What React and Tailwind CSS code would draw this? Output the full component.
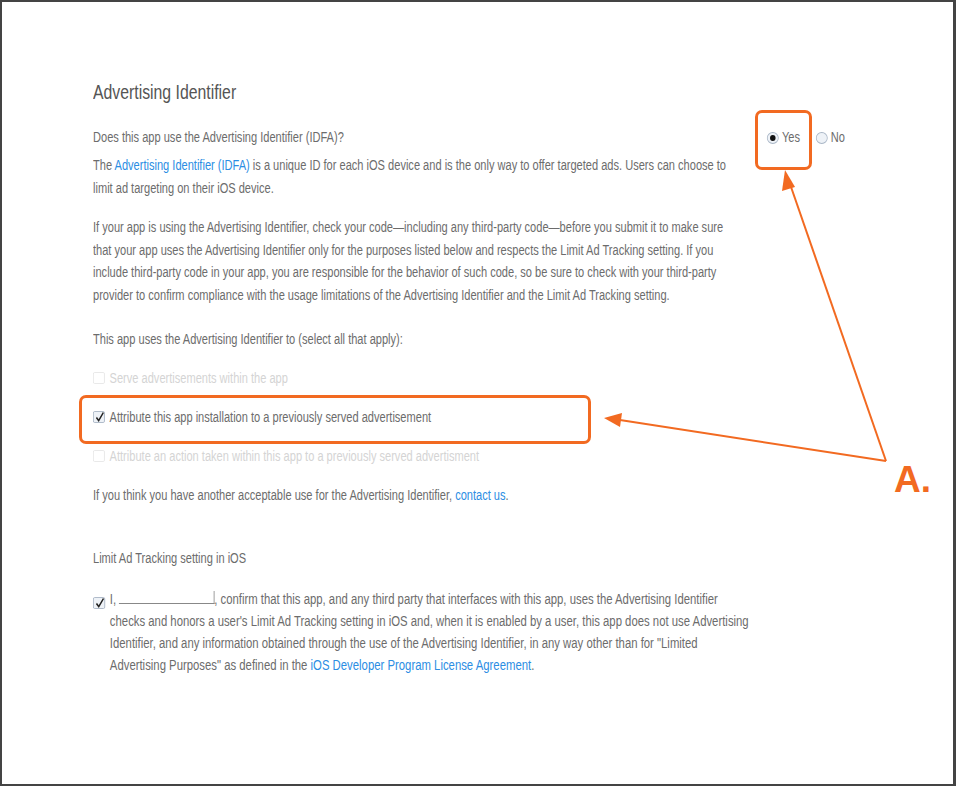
import React from 'react';

const font = { fontFamily: "'Liberation Sans', Arial, sans-serif" };

// boxes sit inside the horizontally squeezed column, so they are drawn wider than they show
const Box = ({ checked, disabled, w = 'w-[15px]' }) => (
    <span className={`relative inline-flex items-center justify-center ${w} h-[12px] border rounded-[2px] shrink-0 ${disabled ? 'border-[#e6e6e6] bg-white' : 'border-[#a8b4c4] bg-[#eef2f7]'}`}>
        {checked && (
            <svg viewBox="0 0 14 12" preserveAspectRatio="none" className="absolute left-[1px] top-[-1px] w-full h-[12px]">
                <path d="M2.5 6.5 L5.6 9.6 L12 1.5" fill="none" stroke="#222" strokeWidth="1.8" />
            </svg>
        )}
    </span>
);

const Radio = ({ checked, label }) => (
    <label className="flex items-center gap-[4px]">
        <span className="w-[15px] h-[12px] rounded-[50%] border border-[#a9b6c6] bg-[#eef2f7] flex items-center justify-center">
            {checked && <span className="w-[7px] h-[6px] rounded-[50%] bg-[#111]" />}
        </span>
        <span>{label}</span>
    </label>
);

const Link = ({ children }) => <span className="text-[#2b8de3]">{children}</span>;

export default function App() {
    return (
        <div className="relative w-[956px] h-[786px] bg-white border-t-2 border-l-2 border-b-2 border-r-[3px] border-[#444] text-[#6c6c6c] text-[14px] overflow-hidden" style={font}>
            <div className="pl-[91px] pt-[76px]">
                <div className="w-[1090px] origin-top-left scale-x-[0.79]">
                    <h1 className="text-[20px] text-[#555] leading-[28px]">Advertising Identifier</h1>

                    <div className="flex mt-[20px]">
                        <div className="w-[826px] shrink-0 leading-[23px]">
                            <p>Does this app use the Advertising Identifier (IDFA)?</p>
                            <p className="mt-[5px] w-[850px]">
                                The <Link>Advertising Identifier (IDFA)</Link> is a unique ID for each iOS device and is the only way to offer targeted ads. Users can choose to<br />
                                limit ad targeting on their iOS device.
                            </p>
                            <p className="mt-[16px] w-[822px] leading-[22.7px]">
                                If your app is using the Advertising Identifier, check your code—including any third-party code—before you submit it to make sure that your app uses the Advertising Identifier only for the purposes listed below and respects the Limit Ad Tracking setting. If you include third-party code in your app, you are responsible for the behavior of such code, so be sure to check with your third-party provider to confirm compliance with the usage limitations of the Advertising Identifier and the Limit Ad Tracking setting.
                            </p>
                            <p className="mt-[21px]">This app uses the Advertising Identifier to (select all that apply):</p>

                            <div className="mt-[16px] flex flex-col gap-[16px]">
                                <div className="flex items-center gap-[6px] text-[#d4d4d4]">
                                    <Box disabled />
                                    <span>Serve advertisements within the app</span>
                                </div>
                                <div className="flex items-center gap-[6px]">
                                    <Box checked />
                                    <span>Attribute this app installation to a previously served advertisement</span>
                                </div>
                                <div className="flex items-center gap-[6px] text-[#d4d4d4]">
                                    <Box disabled />
                                    <span>Attribute an action taken within this app to a previously served advertisment</span>
                                </div>
                            </div>

                            <p className="mt-[16px]">
                                If you think you have another acceptable use for the Advertising Identifier, <Link>contact us</Link>.
                            </p>
                        </div>

                        <div className="flex gap-[20px] ml-[27px] h-[23px] items-center">
                            <Radio checked label="Yes" />
                            <Radio label="No" />
                        </div>
                    </div>

                    <p className="mt-[40px] leading-[23px]">Limit Ad Tracking setting in iOS</p>
                </div>

                <div className="w-[1000px] origin-top-left scale-x-[0.81] mt-[17px]">
                    <div className="flex gap-[6px] w-[850px] leading-[22px] pt-[1px]">
                        <div className="pt-[5px]"><Box checked w="w-[14.8px]" /></div>
                        <p>
                            <span>I,</span>
                            <span className="inline-block w-[118px] ml-[3px] border-b border-r border-[#888] h-[13px]" />, confirm that this app, and any third party that interfaces with this app, uses the Advertising Identifier<br />
                            checks and honors a user's Limit Ad Tracking setting in iOS and, when it is enabled by a user, this app does not use Advertising<br />
                            Identifier, and any information obtained through the use of the Advertising Identifier, in any way other than for "Limited<br />
                            Advertising Purposes" as defined in the <Link>iOS Developer Program License Agreement</Link>.
                        </p>
                    </div>
                </div>
            </div>

            {/* annotations */}
            <div className="absolute left-[753px] top-[108px] w-[57px] h-[60px] border-[3.5px] border-[#f26a21] rounded-[7px]" />
            <div className="absolute left-[77px] top-[393px] w-[512px] h-[49px] border-[3.5px] border-[#f26a21] rounded-[7px]" />
            <svg className="absolute left-0 top-0" width="956" height="786" viewBox="0 0 956 786">
                <line x1="884" y1="459" x2="788" y2="182" stroke="#f26a21" strokeWidth="2" />
                <polygon points="783,168 780,189 793,185" fill="#f26a21" />
                <line x1="884" y1="459" x2="618" y2="418" stroke="#f26a21" strokeWidth="2" />
                <polygon points="602,416 620,411 618,425" fill="#f26a21" />
            </svg>
            <div className="absolute left-[892px] top-[459px] text-[#f26a21] text-[37px] font-bold leading-[37px]">A.</div>
        </div>
    );
}
